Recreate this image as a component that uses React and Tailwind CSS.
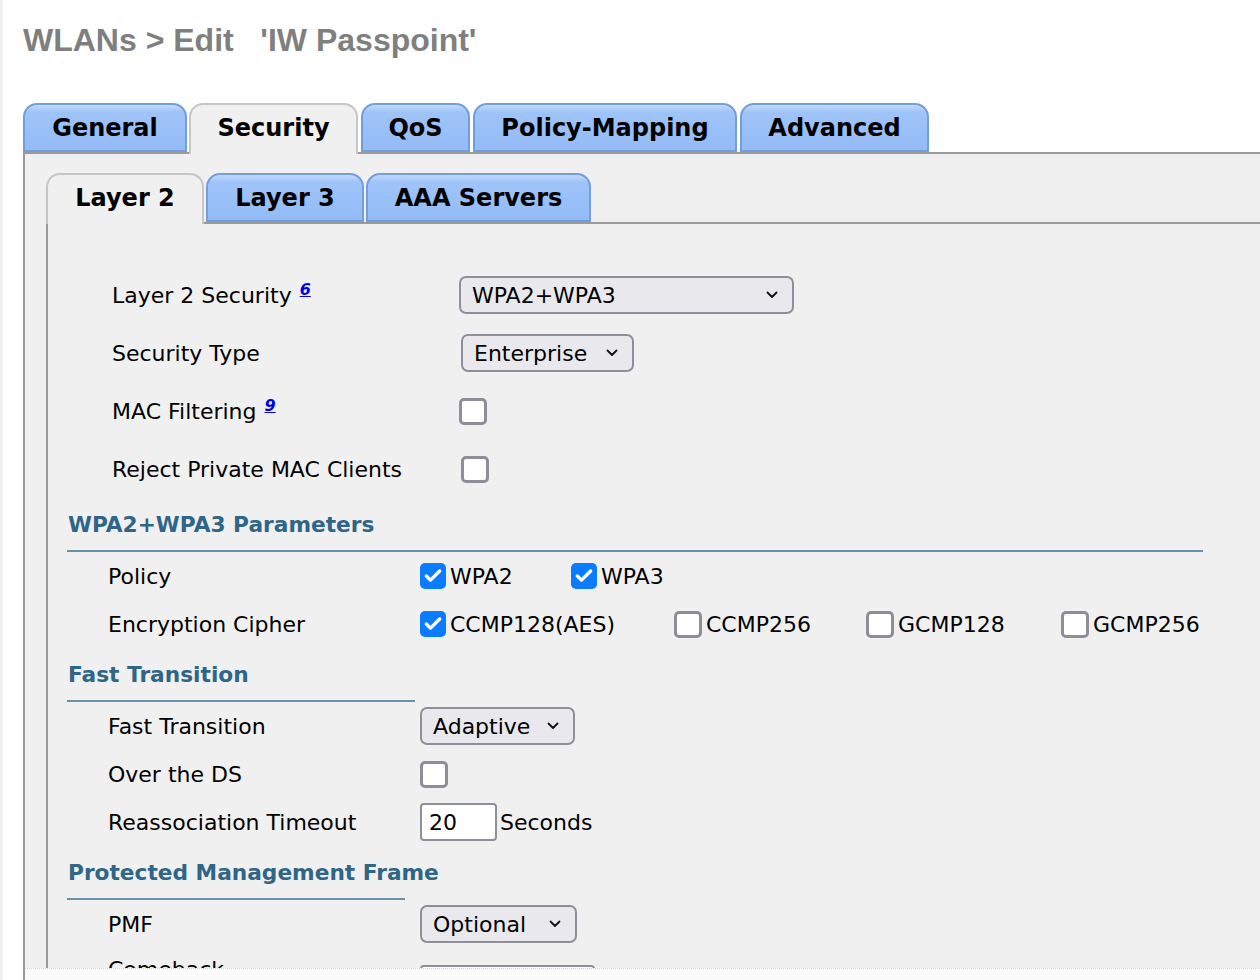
import { Check } from "lucide-react"

const FONT = { fontFamily: '"DejaVu Sans", Verdana, sans-serif' }

function Tab({ label, width, active, className = "" }) {
  if (active) {
    return (
      <div
        className={`relative z-10 -mb-[2px] flex h-[51px] items-center justify-center rounded-t-[14px] border-2 border-b-0 border-[#c6c6c6] bg-[#f0f0f0] pb-[3px] text-[24px] font-bold text-black ${className}`}
        style={{ width }}
      >
        {label}
      </div>
    )
  }
  return (
    <div
      className={`flex h-[49px] items-center justify-center rounded-t-[14px] border-2 border-[#729ede] bg-[linear-gradient(to_bottom,#c4dbfc_0px,#9fc4f9_7px,#93bbf6_100%)] text-[24px] font-bold text-black ${className}`}
      style={{ width }}
    >
      {label}
    </div>
  )
}

function Select({ value, width, className = "" }) {
  return (
    <div
      className={`flex h-[38px] items-center justify-between rounded-[7px] border-2 border-[#8f8f98] bg-[#e9e9ed] pl-[11px] pr-[14px] ${className}`}
      style={{ width }}
    >
      <span>{value}</span>
      <svg width="12" height="8" viewBox="0 0 12 8" fill="none">
        <path d="M1.5 1.5 L6 6 L10.5 1.5" stroke="#111" strokeWidth="1.8" strokeLinecap="round" strokeLinejoin="round" />
      </svg>
    </div>
  )
}

function Box({ checked, className = "" }) {
  if (checked) {
    return (
      <span className={`flex h-[26px] w-[26px] shrink-0 items-center justify-center rounded-[5px] bg-[#0b7cff] ${className}`}>
        <Check className="h-[20px] w-[20px] text-white" strokeWidth={4} />
      </span>
    )
  }
  return <span className={`block h-[27px] w-[28px] shrink-0 rounded-[5px] border-[3px] border-[#8e8e98] bg-white ${className}`} />
}

function Option({ checked, label, width }) {
  return (
    <div className="flex items-center gap-[4px]" style={{ width }}>
      <Box checked={checked} className={checked ? "" : "-ml-[1px]"} />
      <span>{label}</span>
    </div>
  )
}

function Sup({ n }) {
  return (
    <sup className="ml-[8px] text-[16px] font-bold italic text-[#0000ee] underline">{n}</sup>
  )
}

function SectionTitle({ title, lineWidth }) {
  return (
    <div className="pt-[14px]">
      <div className="pl-[20px] text-[21.7px] font-bold leading-[26px] text-[#2f6587]">{title}</div>
      <div className="ml-[19px] mt-[12px] h-[2px] bg-[#6b90aa]" style={{ width: lineWidth }} />
    </div>
  )
}

function Row({ label, children }) {
  return (
    <div className="flex h-[48px] items-center">
      <div className="w-[372px] shrink-0 pl-[60px]">{label}</div>
      <div className="flex items-center">{children}</div>
    </div>
  )
}

function TopRow({ label, children }) {
  return (
    <div className="flex h-[58px] items-center">
      <div className="w-[411px] shrink-0 pl-[64px]">{label}</div>
      <div className="flex items-center">{children}</div>
    </div>
  )
}

export default function App() {
  return (
    <div className="flex h-[980px] w-[1260px] overflow-hidden bg-white text-[22px] text-black" style={FONT}>
      <div className="w-[3px] shrink-0 bg-[#f0f0f0]" />
      <div className="flex min-w-0 flex-1 flex-col pl-[20px]">
        {/* page title */}
        <h1
          className="pt-[22px] text-[32px] font-bold leading-[36px] whitespace-pre text-[#7f7f7f]"
          style={{ fontFamily: '"Liberation Sans", Arial, sans-serif' }}
        >
          {"WLANs > Edit   'IW Passpoint'"}
        </h1>

        {/* main tabs */}
        <div className="mt-[45px] flex items-end">
          <Tab label="General" width={164} />
          <Tab label="Security" width={169} active className="ml-[2px]" />
          <Tab label="QoS" width={109} className="ml-[3px]" />
          <Tab label="Policy-Mapping" width={264} className="ml-[3px]" />
          <Tab label="Advanced" width={189} className="ml-[3px]" />
        </div>

        <div className="flex min-h-0 flex-1 flex-col border-l-2 border-t-2 border-[#9a9a9a] bg-[#f0f0f0]">
          <div className="flex min-h-0 flex-1 flex-col overflow-hidden pl-[21px] pt-[19px]">
            {/* sub tabs */}
            <div className="flex items-end gap-[2px]">
              <Tab label="Layer 2" width={158} active />
              <Tab label="Layer 3" width={158} />
              <Tab label="AAA Servers" width={225} />
            </div>

            <div className="min-h-0 flex-1 border-l-2 border-t-2 border-[#9a9a9a] pt-[42px]">
              <TopRow label={<span>Layer 2 Security<Sup n="6" /></span>}>
                <Select value="WPA2+WPA3" width={335} />
              </TopRow>
              <TopRow label="Security Type">
                <Select value="Enterprise" width={173} className="ml-[2px]" />
              </TopRow>
              <TopRow label={<span>MAC Filtering<Sup n="9" /></span>}>
                <Box />
              </TopRow>
              <TopRow label="Reject Private MAC Clients">
                <Box className="ml-[2px]" />
              </TopRow>

              <SectionTitle title="WPA2+WPA3 Parameters" lineWidth={1136} />
              <Row label="Policy">
                <Option checked label="WPA2" width={151} />
                <Option checked label="WPA3" />
              </Row>
              <Row label="Encryption Cipher">
                <Option checked label="CCMP128(AES)" width={255} />
                <Option label="CCMP256" width={192} />
                <Option label="GCMP128" width={195} />
                <Option label="GCMP256" />
              </Row>

              <SectionTitle title="Fast Transition" lineWidth={348} />
              <Row label="Fast Transition">
                <Select value="Adaptive" width={155} />
              </Row>
              <Row label="Over the DS">
                <Box checked={false} />
              </Row>
              <Row label="Reassociation Timeout">
                <div className="flex h-[38px] w-[77px] items-center rounded-[4px] border-2 border-[#8f8f98] bg-white pl-[7px]">20</div>
                <span className="ml-[3px]">Seconds</span>
              </Row>

              <SectionTitle title="Protected Management Frame" lineWidth={338} />
              <Row label="PMF">
                <Select value="Optional" width={157} />
              </Row>
              <div className="flex h-[48px] items-start">
                <div className="w-[372px] shrink-0 pl-[60px] pt-[5px]">Comeback</div>
                <div className="mt-[17px] h-[38px] w-[175px] rounded-[4px] border-2 border-[#8f8f98] bg-white" />
              </div>
            </div>
          </div>
          {/* bottom bar */}
          <div className="h-[12px] shrink-0 border-t border-dotted border-[#d8d8d8] bg-[#fafafa]" />
        </div>
      </div>
    </div>
  )
}
